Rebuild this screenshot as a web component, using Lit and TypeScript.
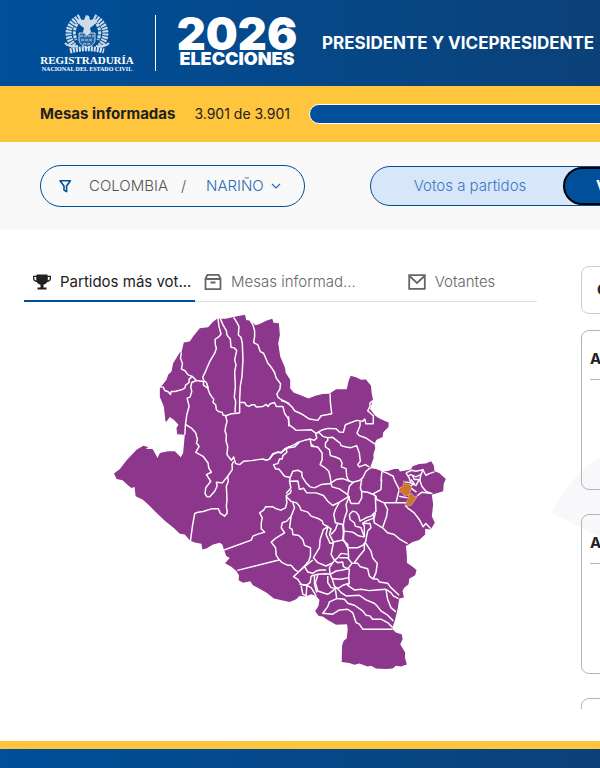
import { LitElement, html, css, svg } from "lit";
import { customElement } from "lit/decorators.js";

/* Department outline, in units of a third of a pixel at the natural map size. */
const OUTLINE =
  "352,26 378,26 405,20 436,14 440,30 452,32 468,46 480,42 500,32 518,26 522,38 538,40 541,75 536,100 542,140 557,175 558,188 572,210 572,235 582,248 600,255 627,266 650,257 670,253 690,252 710,238 742,238 748,212 754,198 772,203 785,210 800,209 815,228 817,250 821,270 817,282 812,298 828,318 838,325 855,333 868,338 868,352 852,368 850,382 832,390 825,402 828,415 822,435 823,445 814,470 814,476 830,478 848,485 865,484 885,478 898,478 902,486 935,480 940,470 960,463 980,462 996,455 1004,468 1006,485 1020,490 1040,508 1034,522 1032,545 1010,552 998,556 1002,585 998,620 1007,640 995,660 978,658 978,675 960,692 940,698 928,705 920,710 923,740 923,760 940,772 952,782 948,798 930,808 928,825 915,835 910,845 914,865 900,868 896,895 888,930 880,954 880,960 890,970 908,976 910,990 903,1005 912,1020 918,1030 917,1045 923,1066 905,1072 890,1070 880,1078 860,1080 830,1078 815,1070 805,1072 780,1063 765,1067 750,1062 727,1059 728,1010 733,995 742,988 745,960 743,945 710,947 685,932 670,922 658,920 647,906 657,890 660,872 650,860 635,855 618,862 600,860 590,870 570,878 523,868 500,850 480,838 460,828 452,816 430,820 417,813 418,798 410,785 395,772 376,762 390,746 380,740 373,722 368,705 360,700 340,705 320,717 308,720 305,703 288,700 272,695 255,675 240,673 222,656 195,634 165,605 145,585 128,570 107,560 104,532 95,535 85,528 68,512 50,508 42,492 60,478 80,452 110,420 130,408 145,412 138,418 158,418 165,430 173,445 180,430 205,425 225,425 243,443 250,430 255,375 232,374 230,355 236,345 222,330 210,322 200,335 197,335 192,290 180,262 180,235 200,210 205,195 215,185 220,160 240,128 245,128 252,98 270,95 280,80 300,55 325,52 340,35";

/* Municipal borders, grouped by sector; each sector has its own origin. */
const SECTORS: { x: number; y: number; lines: string[] }[] = [
  {
    x: 0, y: 0,
    lines: [
      "355,26 358,50 364,72 358,80 346,88 347,105 350,115 345,130 330,155 315,190 309,202 312,212",
      "245,128 242,145 248,160 245,178 255,182 265,195 278,200 290,212 310,215",
      "182,232 190,232 195,242 205,246 212,254 214,245 225,245 245,240 255,235 258,225 268,218 268,208 278,200",
      "290,212 276,218 273,232 276,245 271,262 262,265 268,290 261,315 257,345 255,375",
      "258,345 275,355 288,370 293,390 290,400 298,410 288,428 310,440 325,460 327,475 335,488 320,495 333,515 318,535 316,552 322,562 330,562 345,545 352,530 350,518 368,520 384,500 398,480 397,465 402,455",
      "312,212 311,226 324,235 330,252 337,262 342,268 340,278 348,285 350,300 358,306 368,308 370,316 378,318 395,312 420,310",
      "312,212 320,218 326,235",
      "362,26 370,45 380,62 382,75 392,88 394,112 404,114 411,122 405,150 409,165 405,185 407,230 404,262 408,275 406,308",
      "402,22 412,38 418,50 416,75 424,82 428,100 430,150 427,200 422,230 420,270 420,310",
      "452,32 460,45 465,62 465,80 462,98 475,105 482,125 492,130 505,160 515,172 525,188 530,205 543,222 541,238 532,252 535,262 545,270 570,282",
      "422,278 435,278 440,287 448,290 456,285 465,285 470,292 490,290 500,284 505,290 512,282 525,278 530,290 550,290 555,310 567,328 568,350",
      "378,318 382,335 378,350 376,365 380,375 379,395 384,410 382,435 395,452 402,442 408,462 420,465 432,455 455,453 475,450 490,448 500,452 510,448 520,435 532,428 545,428 570,410",
      "384,500 386,515 380,530 382,570 380,590 383,610",
    ],
  },
  {
    x: 510, y: 0,
    lines: [
      "35,272 48,276 60,285 68,292 75,303 95,312 120,328 145,332 155,318 187,312 183,280 182,252",
      "57,320 58,345 68,352 80,362 125,360 138,370",
      "50,415 52,428 40,438 38,448 30,448 25,462 12,465 18,478 28,478 45,500 62,504",
      "138,372 160,360 175,356 200,357 210,367 222,368 228,345 262,332 280,335 286,328 290,342 312,342 312,318 295,303 302,290 302,280 311,272",
      "272,335 272,348 263,370 270,378 290,385 315,402",
      "138,370 142,385 135,392 122,388 126,410 132,405",
      "0,447 10,432 25,428 35,430 45,418 75,405 85,398 105,392 122,388",
      "50,415 75,412 90,398",
      "142,370 148,368 160,380 175,384 175,392 168,400 168,412 180,420 183,438 198,442 212,448 218,460 216,472 230,477 232,500 238,515",
      "175,384 190,383 205,395 212,400 215,408 230,412 245,414 262,408 270,430 273,455 265,465 270,472 288,465 300,472",
      "126,410 145,412 158,430 158,450 152,465 165,473 178,485 182,500 185,520",
      "62,504 70,485 85,482 97,488 98,502 110,520 122,532 135,535",
      "185,520 200,510 220,507 250,518 270,513 280,505 290,485 304,474",
      "62,504 60,515 64,535 50,552",
      "62,515 85,514 90,540",
      "338,485 335,515",
      "338,485 352,490 372,500 375,510",
      "410,490 420,505 425,520 408,517",
      "410,490 428,482 440,485 462,480 455,495 440,502 425,495 415,500",
      "462,482 470,497 480,492 496,487",
      "455,495 452,512 458,530 470,545 485,552",
      "425,520 440,528 450,510 435,510 430,498",
    ],
  },
  {
    x: 240, y: 510,
    lines: [
      "143,100 135,110 122,102 116,88 95,88 70,96 55,98 45,102 38,140 32,185",
      "133,212 215,182 220,170 235,164 255,158 245,148 245,130 248,115 240,100 252,92 258,82 280,82 290,88 304,92 318,85 322,70 320,48 333,40 335,30",
      "320,50 335,66 352,70 360,80 365,92 385,98 395,110 418,118 428,124 432,135 447,142",
      "335,110 322,125 308,130 305,145 315,160 290,175 275,188 288,205 290,228 298,240 308,250 325,258 335,258 345,270 355,277",
      "340,70 345,85 335,110 330,145 338,150 340,165 358,168 370,180 375,198 393,205 393,230 388,245 375,260 355,280 342,292 355,300 365,315 380,318",
      "173,273 298,242",
    ],
  },
  {
    x: 600, y: 510,
    lines: [
      "0,30 12,26 22,40 50,40 72,48 85,65 100,78 120,68 150,50",
      "45,25 65,15 95,12 98,22 120,28 145,45",
      "85,142 72,150 62,180 60,205 42,235 55,250 80,260 100,250",
      "85,142 80,165 92,192 102,190 95,225 105,243 90,265 92,285",
      "85,142 95,148 90,165 102,188 130,182",
      "120,68 118,72 108,90 103,105 108,130 130,135 132,160 130,182 145,195 148,235",
      "95,165 108,150 115,132",
      "150,50 140,75 143,95 135,118 132,135 134,155 160,158 175,168 195,173",
      "150,105 160,95 170,98 178,108 182,125 200,115 215,110 230,95 228,50",
      "145,45 150,20 162,8",
      "145,45 155,72 178,72 187,55 187,36 183,25 187,0",
      "187,36 205,38 220,44 245,30 247,0",
      "220,44 230,50 232,60 255,70 320,70",
      "150,105 152,120 165,130 168,140 185,145 195,173",
      "195,173 195,140 190,132 212,132 215,145 205,155 198,190 215,215 220,235 234,252 230,280 222,298",
      "134,155 132,180 145,205 175,205 190,198 198,190",
      "195,190 195,212 180,230 165,250",
      "190,132 200,125 225,115 228,100",
      "255,70 265,90 262,110 250,145 265,160 285,165 300,178 325,193",
      "222,105 225,130 250,145",
      "285,0 300,30 290,70",
      "300,50 325,55",
      "318,78 325,85 345,100 360,120 372,142 380,132 395,148",
      "355,48 368,38 400,42",
      "335,0 345,12 330,22 352,38",
      "105,243 115,235 125,222 148,225",
      "120,235 145,235 158,252 145,268",
      "158,252 175,252 183,262 205,268 210,290 220,298 235,300 240,308 265,312 275,325 300,348",
      "105,243 115,250 130,248 132,262 145,268 150,270 148,295 125,300 98,298",
      "92,285 110,275 130,272 145,268",
      "0,275 15,262 25,278 40,282 50,275 62,272 80,272",
      "15,262 20,258 40,242",
      "35,290 55,285 80,283 92,285 98,298 105,320 115,328",
      "35,290 32,310 20,318 0,315",
      "55,288 48,310 55,335 75,342 85,345 100,335 108,325",
      "45,290 45,315 52,340",
      "5,320 10,345 20,350 22,318 35,325 50,350",
      "85,290 85,310 95,325 115,328 130,318 150,312 148,295",
      "150,312 145,318 165,332 185,330 210,334 230,332 260,330",
      "260,330 265,360 275,385 290,398",
      "260,330 275,340 282,350 298,358",
      "115,328 125,340 140,350 180,348 200,362 225,372 235,382 245,395 265,408 282,425",
      "108,330 112,358 135,360 145,372 165,378 190,395 200,408 212,410 220,420 245,420 265,430 280,445",
      "112,358 90,368 85,382 70,402 100,405 120,392 145,390 160,400 170,430 180,435 190,450 280,450",
    ],
  },
];

@customElement("nrn-map")
export class NrnMap extends LitElement {
  static styles = css`
    :host { display: block; }
    .map { display: block; width: 100%; height: auto; }
    .land { fill: #8c368c; }
    .alt { fill: #d0762b; stroke: #fff; stroke-width: 1; }
    .border { fill: none; stroke: #fff; stroke-width: 4.4; stroke-linejoin: round; }
  `;
  render() {
    return html`
      <svg class="map" viewBox="0 0 1080 1110" role="img" aria-label="Nariño">
        <polygon class="land" points=${OUTLINE} />
        ${SECTORS.map(
          (s) => svg`<g transform="translate(${s.x} ${s.y})">
            ${s.lines.map((l) => svg`<polyline class="border" points=${l} />`)}
          </g>`
        )}
        <polygon class="alt" points="914,513 921,524 932,524 938,534 930,556 915,560 909,550 898,544 902,534 911,531" />
        <polygon class="alt" points="928,556 938,552 946,562 958,556 936,588 917,588 927,568" />
      </svg>
    `;
  }
}

@customElement("app-root")
export class AppRoot extends LitElement {
  static styles = css`
    :host {
      display: flex;
      flex-direction: column;
      min-height: 100vh;
      overflow: hidden;
      background: #fff;
      color: #212121;
      font-family: Inter, "Open Sans", sans-serif;
      font-size: 14px;
      line-height: 20px;
    }
    * { box-sizing: border-box; }
    button { font: inherit; color: inherit; background: none; border: 0; padding: 0; cursor: pointer; }

    .header {
      display: flex;
      align-items: center;
      height: 86px;
      padding-left: 40px;
      color: #fff;
      white-space: nowrap;
      background: linear-gradient(90deg, #004f9a 0, #0b4178 600px);
    }
    .registry {
      display: flex;
      flex-direction: column;
      align-items: center;
      width: 94px;
      font-family: "Liberation Serif", serif;
      font-weight: 700;
      color: inherit;
      text-decoration: none;
    }
    .crest { width: 46px; height: 42px; }
    .registry-name { font-size: 11px; line-height: 11px; }
    .registry-sub { font-size: 6px; line-height: 7px; }
    .rule { width: 1px; height: 56px; margin: 0 20px 0 21px; background: #fff; }
    .elections {
      display: flex;
      flex-direction: column;
      align-items: center;
      width: 122px;
      font-weight: 900;
    }
    .year { font-size: 45px; line-height: 32px; }
    .word { font-size: 18px; line-height: 18px; }
    .title { margin: 0 0 0 24px; font-size: 17px; line-height: 24px; font-weight: 700; }

    .progress {
      display: flex;
      align-items: center;
      gap: 19px;
      height: 56px;
      padding-left: 40px;
      background: #ffc53d;
      white-space: nowrap;
    }
    .progress-label { font-size: 15px; }
    .progress-count { width: 96px; }
    .bar { flex: 1 0 320px; height: 20px; border: 1px solid #fff; border-radius: 10px; background: #004f9a; }

    .filters {
      display: flex;
      align-items: center;
      gap: 65px;
      height: 88px;
      padding-left: 40px;
      background: #f9f9f9;
      white-space: nowrap;
      font-size: 15px;
    }
    .place {
      display: flex;
      flex: none;
      align-items: center;
      width: 265px;
      height: 42px;
      padding-left: 17px;
      border: 1px solid #004f9a;
      border-radius: 21px;
      font-weight: 300;
    }
    .funnel { width: 14px; height: 14px; margin-right: 17px; }
    .country { width: 80px; text-align: left; color: #555; }
    .slash { width: 37px; padding-left: 12px; color: #555; }
    .region { display: flex; align-items: center; gap: 7px; color: #2b69b3; }
    .chevron { width: 10px; height: 6px; }
    .switch {
      display: flex;
      flex: 1 0 380px;
      height: 40px;
      border: 1px solid #004f9a;
      border-radius: 20px;
      background: #d7e6f9;
    }
    .switch-item { flex: 0 0 192px; padding-left: 6px; font-weight: 300; color: #3a78c2; }
    .selected {
      flex: 1;
      padding-left: 31px;
      text-align: left;
      font-weight: 700;
      color: #fff;
      background: #004f9a;
      border: 2px solid #000;
      border-radius: 20px;
    }

    .main {
      position: relative;
      display: grid;
      flex: 1;
      grid-template-columns: minmax(513px, 3fr) minmax(320px, 2fr);
      gap: 44px;
      padding: 32px 24px;
    }
    .watermark { position: absolute; top: 225px; left: 552px; width: 240px; height: 160px; fill: #f8f8fa; }
    .tabs { display: grid; grid-template-columns: repeat(3, 1fr); border-bottom: 1px solid #ddd; }
    .tab {
      display: flex;
      align-items: center;
      gap: 9px;
      height: 40px;
      margin-bottom: -1px;
      padding: 2px 0 0 9px;
      font-size: 15px;
      font-weight: 300;
      color: #666;
      border-bottom: 2px solid transparent;
    }
    .tab-active { color: #212121; font-weight: 400; border-color: #004f9a; }
    .tab-center { justify-content: center; padding-left: 0; }
    .tab-text { white-space: nowrap; }
    .tab-icon { flex: none; width: 18px; height: 18px; }
    .map-box { width: 70%; margin: 8px 0 0 76px; }

    .results { position: relative; display: flex; flex-direction: column; height: 447px; padding-top: 4px; overflow: hidden; }
    .card { flex: none; border: 1px solid #b5b5b5; border-radius: 8px; }
    .finder { height: 48px; margin-bottom: 16px; padding: 13px 15px; font-size: 15px; font-weight: 700; border-color: #ccc; }
    .entry { height: 160px; margin-bottom: 24px; padding: 0 8px; }
    .entry-title { margin: 0; padding: 18px 0 10px; font-size: 15px; line-height: 20px; font-weight: 700; border-bottom: 1px solid #b5b5b5; }
    .footer { height: 27px; border-top: 8px solid #ffc53d; background: linear-gradient(90deg, #004f9a 0, #0b4178 600px); }
  `;

  private crest() {
    return html`<svg class="crest" viewBox="0 0 46 42" fill="none" stroke="#fff" aria-hidden="true">
      <g opacity=".8">
        <path d="M16 4C8 8 3 16 5 24c1 4 3 7 6 10M30 4c8 4 13 12 11 20-1 4-3 7-6 10" stroke-width="6" stroke-dasharray="2 1" />
        <path d="M16 8c-6 5-7 12-4 19M30 8c6 5 7 12 4 19" stroke-width="3" stroke-dasharray="3 1" />
        <path d="M22 2l3 1 1 4 6-1-2 6-4 3 1 4-4 4-4-4 1-4-4-3-3-6 7 1z" fill="#fff" stroke="none" />
        <path d="M15 20v7c0 4 4 6 8 8 4-2 8-4 8-8v-7z" fill="#fff" fill-opacity=".2" />
        <path d="M16 23h14M17 27h12M19 31h8" stroke-dasharray="3 1" />
        <path d="M1 30c4 4 8 4 13 3M45 30c-4 4-8 4-13 3" stroke-width="2" />
      </g>
      <path d="M6 38c11-3 23-3 34 0" stroke-width="5" stroke-dasharray="2 1" opacity=".85" />
    </svg>`;
  }

  render() {
    return html`
      <header class="header">
        <a class="registry" href="#">
          ${this.crest()}
          <span class="registry-name">REGISTRADURÍA</span>
          <span class="registry-sub">NACIONAL DEL ESTADO CIVIL</span>
        </a>
        <span class="rule"></span>
        <div class="elections">
          <span class="year">2026</span>
          <span class="word">ELECCIONES</span>
        </div>
        <h1 class="title">PRESIDENTE Y VICEPRESIDENTE</h1>
      </header>

      <section class="progress">
        <strong class="progress-label">Mesas informadas</strong>
        <span class="progress-count">3.901 de 3.901</span>
        <div class="bar" role="progressbar" aria-label="Mesas informadas" aria-valuenow="100"></div>
      </section>

      <section class="filters">
        <div class="place">
          <svg class="funnel" viewBox="0 0 14 14" fill="none" stroke="#004f9a" stroke-width="1.6" aria-hidden="true">
            <path d="M2 1.8h10.4L8.6 7v5.6L6 11V7z" stroke-linejoin="round" />
          </svg>
          <button class="country">COLOMBIA</button>
          <span class="slash">/</span>
          <button class="region">
            NARIÑO
            <svg class="chevron" viewBox="0 0 10 6" fill="none" stroke="currentColor" stroke-width="1.2" aria-hidden="true">
              <path d="M1 1l4 4 4-4" />
            </svg>
          </button>
        </div>
        <div class="switch">
          <button class="switch-item">Votos a partidos</button>
          <button class="selected">V</button>
        </div>
      </section>

      <main class="main">
        <svg class="watermark" viewBox="0 0 240 160" aria-hidden="true">
          <path d="M0 58Q17 22 50 0H240V160L48 82z" />
        </svg>
        <section>
          <nav class="tabs" role="tablist">
            <button class="tab tab-active" role="tab" aria-selected="true">
              <svg class="tab-icon" viewBox="0 0 18 18" fill="#212121" aria-hidden="true">
                <path d="M3.5 1.5h11v1.2H18v3c0 2-1.6 3.2-3.8 3.4-.7 1.5-2 2.4-3.7 2.6v2.8h3v2h-9v-2h3v-2.8C5.8 11.5 4.5 10.6 3.8 9.1 1.6 8.9 0 7.7 0 5.7v-3h3.5zM1.3 4v1.700c0 .9.7 1.500 1.900 1.800V4zm13.500 0v3.500c1.200-.3 1.900-.9 1.900-1.800V4z" />
              </svg>
              <span class="tab-text">Partidos más vot...</span>
            </button>
            <button class="tab" role="tab">
              <svg class="tab-icon" viewBox="0 0 18 18" fill="none" stroke="#666" stroke-width="1.8" aria-hidden="true">
                <path d="M1.500 5.500L3.500 1.800h11L16.500 5.500v10.700h-15zM1.500 6h15M6.500 9.500h5" stroke-linejoin="round" />
              </svg>
              <span class="tab-text">Mesas informad...</span>
            </button>
            <button class="tab tab-center" role="tab">
              <svg class="tab-icon" viewBox="0 0 18 18" fill="none" stroke="#666" stroke-width="1.800" aria-hidden="true">
                <path d="M1.200 2.200h15.600v13.600H1.200zM1.500 3L9 10l7.500-7" />
              </svg>
              <span class="tab-text">Votantes</span>
            </button>
          </nav>
          <div class="map-box"><nrn-map></nrn-map></div>
        </section>
        <section class="results">
          <div class="card finder">C</div>
          <article class="card entry"><h2 class="entry-title">A</h2></article>
          <article class="card entry"><h2 class="entry-title">A</h2></article>
          <article class="card entry"></article>
        </section>
      </main>
      <footer class="footer"></footer>
    `;
  }
}
